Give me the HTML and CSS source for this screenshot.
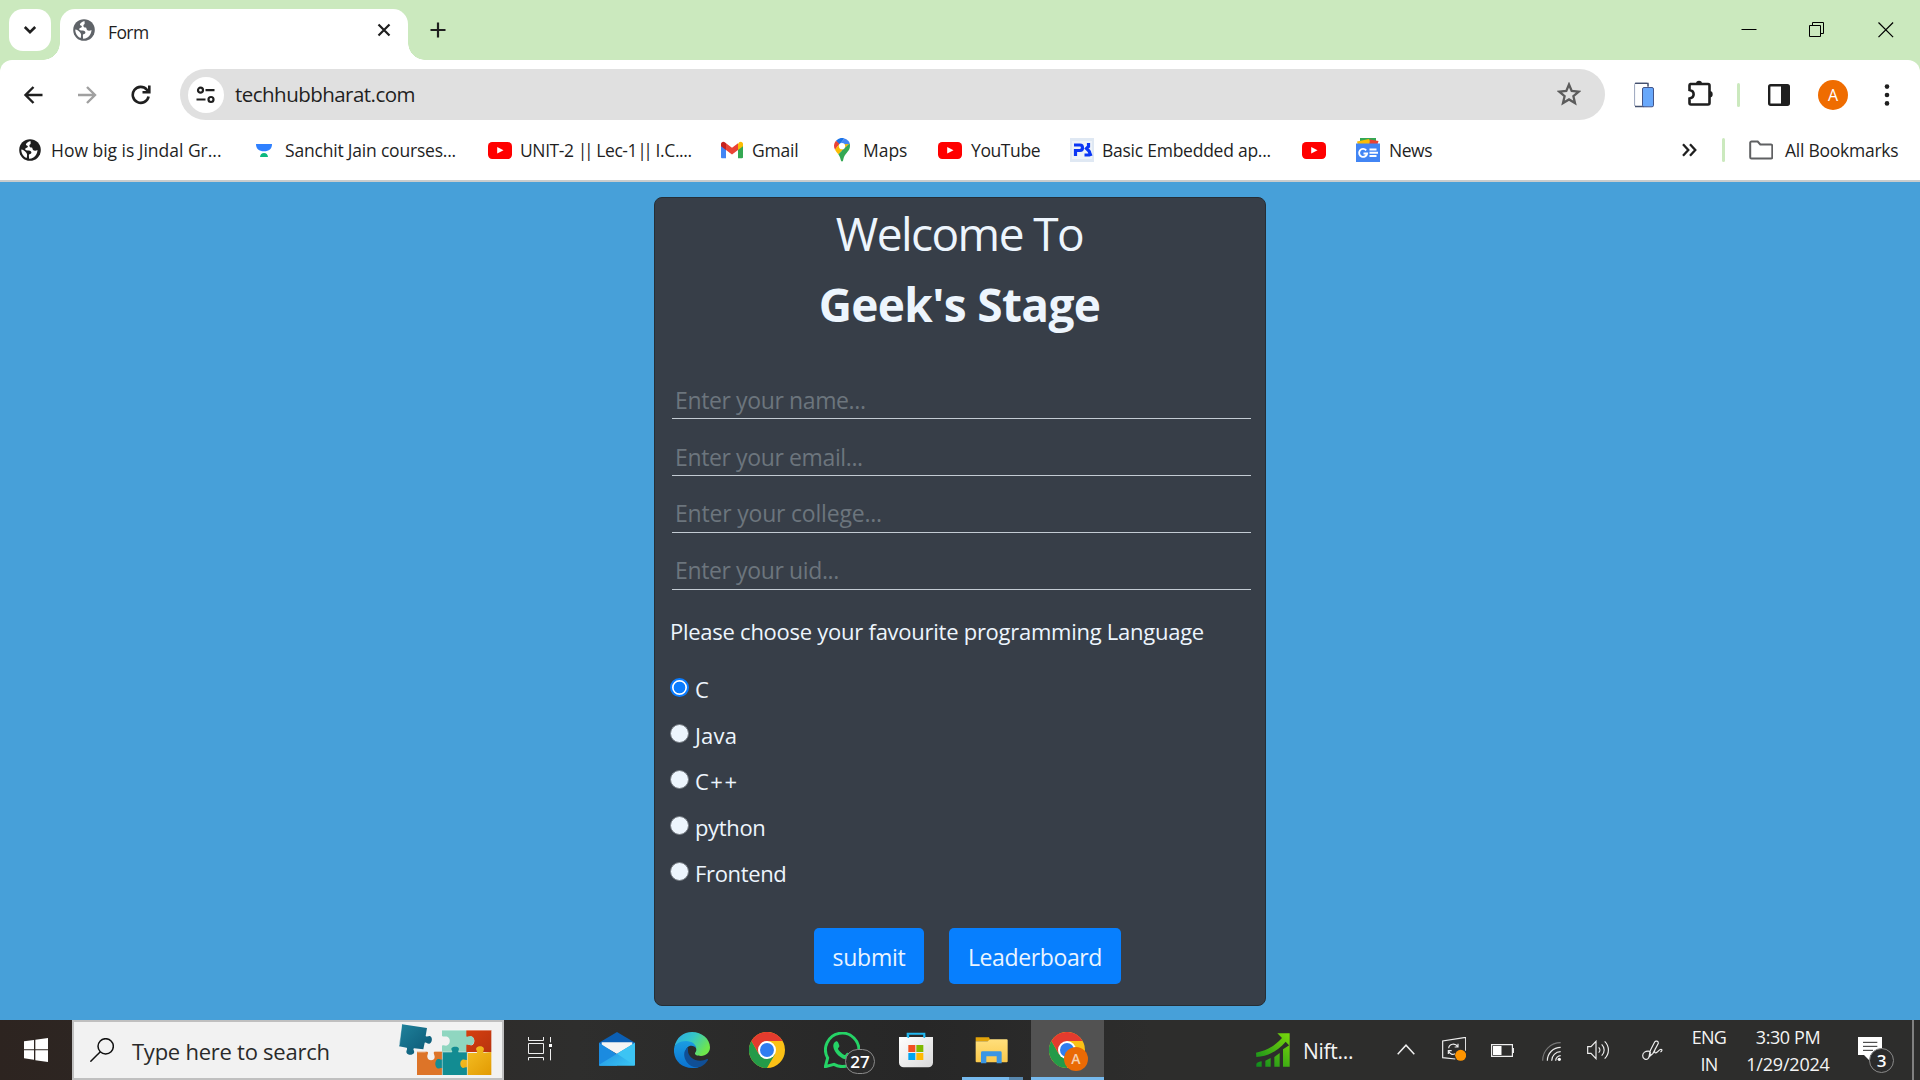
FILE: index.html
```html
<!DOCTYPE html>
<html lang="en">
<head>
<meta charset="utf-8">
<title>Form</title>
<link rel="stylesheet" href="styles.css">
</head>
<body>
<svg class="defs" width="0" height="0">
  <defs>
    <symbol id="globe" viewBox="0 0 24 24"><circle cx="12" cy="12" r="10.8" fill="currentColor"/><path d="M12.500 3.100c-3 .6-4.600 2.500-4.600 3.700 0 1 2.200.6 2 1.900-.2 1-1.900.9-2.500 1.800-.7 1.100.2 1.900 1.900 1.900 2.100 0 3.600.2 4 1.600.3 1-.2 1.700-1.200 2-1 .2-1.300.8-1.200 1.800l.2 2.900c3-.1 6.100-1.900 7.400-4.800.6-1.200 1-2.500 1-3.900-1.500.9-3.500.9-4.500-.1-.8-.9-.2-2-1.400-2.300-1.500-.3-2.300-.9-2.200-2.200.1-1.100 1.300-1 1.300-2z" fill="#fff"/><path d="M3.300 11.500c1.700.2 3.700 1.500 5 3.300.7 1 1 2 .7 3.500l-.3 1.700C5.400 18.700 3.200 15.500 3.300 11.500z" fill="#fff"/></symbol>
    <symbol id="youtube" viewBox="0 0 24 24"><rect y="4" width="24" height="17" rx="4.200" fill="#f00"/><path d="M9.200 9v6.600l6.300-3.300z" fill="#fff"/></symbol>
    <symbol id="chrome" viewBox="0 0 48 48"><circle cx="24" cy="24" r="24" fill="#fbc116"/><path d="M24 24 13.600 30 3.200 12A24 24 0 0 0 24 48L34.400 30z" fill="#249a49"/><path d="M3.200 12A24 24 0 0 1 44.800 12H24v12L13.600 30z" fill="#e33b2e"/><circle cx="24" cy="24" r="12" fill="#fff"/><circle cx="24" cy="24" r="9.300" fill="#2f7df0"/></symbol>
    <linearGradient id="mailg" x1="0" y1="0" x2="1" y2="1"><stop offset="0" stop-color="#1a86dd"/><stop offset="1" stop-color="#3cc8f5"/></linearGradient>
    <linearGradient id="edgeTop" x1="0" y1="0" x2="1" y2=".5"><stop offset="0" stop-color="#2aa7e8"/><stop offset=".5" stop-color="#35c5c8"/><stop offset="1" stop-color="#6ee64c"/></linearGradient>
    <linearGradient id="edgeLow" x1="0" y1="0" x2="0" y2="1"><stop offset="0" stop-color="#1b9de2"/><stop offset="1" stop-color="#0a72d0"/></linearGradient>
    <linearGradient id="storeg" x1="0" y1="0" x2="1" y2="1"><stop offset="0" stop-color="#fff"/><stop offset="1" stop-color="#d9d9d9"/></linearGradient>
    <linearGradient id="foldg" x1="0" y1="0" x2="0" y2="1"><stop offset="0" stop-color="#ffdf7c"/><stop offset="1" stop-color="#fbc94b"/></linearGradient>
    <linearGradient id="growth" x1="0" y1="1" x2="1" y2="0"><stop offset="0" stop-color="#0c8a1e"/><stop offset=".7" stop-color="#5cc00f"/><stop offset="1" stop-color="#77d80c"/></linearGradient>
    <linearGradient id="teal" x1="0" y1="0" x2="1" y2="1"><stop offset="0" stop-color="#1f829c"/><stop offset="1" stop-color="#0b5673"/></linearGradient>
    <linearGradient id="gold" x1="0" y1="0" x2="1" y2="1"><stop offset="0" stop-color="#f8c52a"/><stop offset="1" stop-color="#e29a02"/></linearGradient>
    <linearGradient id="red" x1="0" y1="0" x2="1" y2="1"><stop offset="0" stop-color="#d6400f"/><stop offset="1" stop-color="#b8330f"/></linearGradient>
  </defs>
</svg>

<header class="tabstrip">
  <button class="tab-search"><svg width="14" height="10" viewBox="0 0 14 10"><path d="M1.800 2 7 7.200 12.200 2" fill="none" stroke="#1f1f1f" stroke-width="2.600"/></svg></button>
  <div class="tab">
    <svg class="tab-icon" width="24" height="24"><use href="#globe"/></svg>
    <span class="tab-title">Form</span>
    <svg class="tab-close" width="14" height="14" viewBox="0 0 14 14"><path d="M1.500 1.500 12.500 12.500M12.500 1.500 1.500 12.500" stroke="#1f1f1f" stroke-width="2.200"/></svg>
  </div>
  <svg class="newtab" width="16" height="16" viewBox="0 0 16 16"><path d="M8 .5v15M.5 8h15" stroke="#1f1f1f" stroke-width="2.200"/></svg>
  <div class="window-buttons">
    <svg width="16" height="16" viewBox="0 0 16 16"><path d="M.5 7.500h15" stroke="#000"/></svg>
    <svg width="16" height="16" viewBox="0 0 16 16" fill="none" stroke="#000"><path d="M.5 3.500h11v11H.5zM3.500 3.500v-3h11v11h-3"/></svg>
    <svg width="16" height="16" viewBox="0 0 16 16"><path d="M.5.5l14.600 14.600M15.100.5.5 15.100" stroke="#000" stroke-width="1.200"/></svg>
  </div>
</header>

<div class="chrome">
  <nav class="toolbar">
    <div class="nav-buttons">
      <svg width="20" height="20" viewBox="0 0 20 20" fill="none" stroke="#1f1f1f" stroke-width="2.400"><path d="M19.500 10H2.500M10.500 2l-8 8 8 8"/></svg>
      <svg width="20" height="20" viewBox="0 0 20 20" fill="none" stroke="#a0a0a0" stroke-width="2.400"><path d="M1 10h16.500M10 2l8 8-8 8"/></svg>
      <svg width="20" height="20" viewBox="0 0 20 20" fill="none" stroke="#1f1f1f" stroke-width="2.600"><path d="M17.600 11.500A8 8 0 1 1 15.800 4.600L18 7"/><path d="M18.300.5V7.200H11.500"/></svg>
    </div>
    <div class="omnibox">
      <div class="site-info"><svg width="20" height="18" viewBox="0 0 20 18" fill="none" stroke="#1f1f1f" stroke-width="2.200"><circle cx="4.500" cy="4.200" r="2.500"/><path d="M9.500 4.200h9M.5 13.500h9"/><circle cx="15" cy="13.500" r="2.500"/></svg></div>
      <span class="url">techhubbharat.com</span>
      <svg class="star" width="24" height="24" viewBox="0 0 24 24"><path d="M12 2.500l2.700 6.500 7 .6-5.300 4.600 1.600 6.900-6-3.700-6 3.700 1.600-6.900L2.300 9.600l7-.6z" fill="none" stroke="#5c5c5c" stroke-width="2.300"/></svg>
    </div>
    <div class="tools">
      <svg class="t-phone" width="20" height="26" viewBox="0 0 20 26"><rect x=".6" y="1" width="13.500" height="23.500" rx="1.500" fill="#fff" stroke="#9aa5bd"/><path d="M1 1.400h13v3M1 24.500h9" fill="none" stroke="#44506e" stroke-width="1.400"/><rect x="8.500" y="5.500" width="11" height="19.300" rx="1.500" fill="#68a8fb" stroke="#44568a"/></svg>
      <svg class="t-ext" width="27" height="26" viewBox="0 0 27 26"><path d="M3.500 4H21a1.500 1.500 0 0 1 1.500 1.500V23a1.500 1.500 0 0 1-1.500 1.500H4A1.500 1.500 0 0 1 2.500 23v-4.500c5.500-1 5.500-7.500 0-8.500V5.500A1.500 1.500 0 0 1 3.500 4z" fill="none" stroke="#1f1f1f" stroke-width="2.600"/><path d="M9 4a3 3.200 0 0 1 6 0zM22.500 11a3.200 3.200 0 0 1 0 6.400z" fill="#1f1f1f"/></svg>
      <i class="divider"></i>
      <svg class="t-panel" width="22" height="22" viewBox="0 0 22 22"><rect x="1.200" y="1.200" width="19.600" height="19.600" rx="1.500" fill="none" stroke="#1f1f1f" stroke-width="2.400"/><path d="M13 1h8v20h-8z" fill="#1f1f1f"/></svg>
      <span class="avatar">A</span>
      <svg class="t-menu" width="6" height="22" viewBox="0 0 6 22" fill="#1f1f1f"><circle cx="3" cy="2.600" r="2.300"/><circle cx="3" cy="11" r="2.300"/><circle cx="3" cy="19.400" r="2.300"/></svg>
    </div>
  </nav>

  <nav class="bookmarks">
    <a class="bm"><svg><use href="#globe"/></svg><span>How big is Jindal Gr...</span></a>
    <a class="bm bm-course"><svg viewBox="0 0 24 24"><path d="M4 6h16c0 5-3 7.300-8 7.300S4 11 4 6z" fill="#2f80ff"/><path d="M8 19c.3-2.600 1.700-4 4-4s3.700 1.400 4 4z" fill="#0cb87f"/></svg><span>Sanchit Jain courses...</span></a>
    <a class="bm bm-unit"><svg><use href="#youtube"/></svg><span>UNIT-2 <b>||</b> Lec-1<b>||</b> I.C....</span></a>
    <a class="bm bm-gmail"><svg viewBox="0 0 24 24"><path d="M1 7v12.300c0 .5.400.9.900.9H6V10z" fill="#4285f4"/><path d="M18 10v10.200h4.100c.5 0 .9-.4.900-.9V7z" fill="#34a853"/><path d="M18 6v6l5-3.800V6c0-2-2.200-3-3.800-1.800z" fill="#fbbc04"/><path d="M6 12V5.200l6 4.500 6-4.500V12l-6 4.500z" fill="#ea4335"/><path d="M1 6v2.200L6 12V5.200L4.800 4.200C3.200 3 1 4 1 6z" fill="#c5221f"/></svg><span>Gmail</span></a>
    <a class="bm bm-maps"><svg viewBox="0 0 24 24"><path d="M6 2.800A8 8 0 0 1 14.500.4L9 7z" fill="#1a73e8"/><path d="M14.500.4c2.700.8 4.600 2.600 5.300 5.100L12 14 9 7z" fill="#4285f4"/><path d="M6 2.800c-2.500 3-2.500 6-1 9L9.500 6z" fill="#ea4335"/><path d="M5 11.800c.8 1.500 2 3 3.300 4.500L19 6 9 6.500z" fill="#fbbc04"/><path d="M19.800 5.500c.9 5.500-1.500 7.500-4 10.500-2 2.500-2.300 4.800-2.800 6.800-.3 1-1.700 1-2 0-.6-2-1-4.200-2.700-6.500z" fill="#34a853"/><circle cx="12" cy="8.200" r="3.100" fill="#fff"/></svg><span>Maps</span></a>
    <a class="bm bm-yt"><svg><use href="#youtube"/></svg><span>YouTube</span></a>
    <a class="bm bm-ps"><svg viewBox="0 0 24 24"><path d="M0 0h24v24H0z" fill="#dfe8f3"/><path d="M2 3h20v18H2z" fill="#edf2f8"/><path d="M5.500 18v-5.500H10c3.300 0 3.300-5.500 0-5.500H4M18.500 5v3.500l-2 2 2.500 2.500c1.500 2 1 4-1.500 4H14.500M19 13l2 5" fill="none" stroke="#0a36f5" stroke-width="3.200"/></svg><span>Basic Embedded ap...</span></a>
    <a class="bm"><svg><use href="#youtube"/></svg></a>
    <a class="bm bm-news"><svg viewBox="0 0 24 24"><path d="M4 0h16v8H4z" fill="#34a853"/><path d="M1 3.500 13 1l3 6H2z" fill="#fbbc04"/><path d="M14 1.500 22.500 3 21 8h-8z" fill="#ea4335"/><path d="M0 5.500h24V24H0z" fill="#4285f4"/><path d="M10.200 12.300a4 4 0 1 0 .9 3.200H7.500M13.500 11.500h7M13.500 14.700h8.500M13.500 18h7" fill="none" stroke="#fff" stroke-width="1.900"/></svg><span>News</span></a>
    <svg class="more" width="15" height="14" viewBox="0 0 15 14"><path d="M1 1.300 6.300 7 1 12.700M8 1.300 13.300 7 8 12.700" fill="none" stroke="#1f1f1f" stroke-width="2.300"/></svg>
    <i class="divider"></i>
    <a class="bm bm-all"><svg viewBox="0 0 24 24"><path d="M2.500 3.500h6.200l2.600 3H22a1.300 1.300 0 0 1 1.300 1.300v11.400A1.300 1.300 0 0 1 22 20.500H2.500a1.300 1.300 0 0 1-1.300-1.300V4.800a1.300 1.300 0 0 1 1.300-1.300z" fill="none" stroke="#5f6062" stroke-width="2"/></svg><span>All Bookmarks</span></a>
  </nav>
</div>

<main class="page">
  <form class="card">
    <h1 class="welcome">Welcome To</h1>
    <h1 class="brand">Geek's Stage</h1>
    <div class="fields">
      <input type="text" placeholder="Enter your name...">
      <input type="text" placeholder="Enter your email...">
      <input type="text" class="college" placeholder="Enter your college...">
      <input type="text" class="uid" placeholder="Enter your uid...">
    </div>
    <p class="question">Please choose your favourite programming Language</p>
    <div class="options">
      <label><input type="radio" name="lang" checked><span>C</span></label>
      <label class="java"><input type="radio" name="lang"><span>Java</span></label>
      <label class="cpp"><input type="radio" name="lang"><span>C++</span></label>
      <label><input type="radio" name="lang"><span>python</span></label>
      <label><input type="radio" name="lang"><span>Frontend</span></label>
    </div>
    <div class="actions">
      <button class="btn btn-submit" type="button">submit</button>
      <button class="btn btn-board" type="button">Leaderboard</button>
    </div>
  </form>
</main>

<footer class="taskbar">
  <div class="start"><svg width="24" height="24" viewBox="0 0 72 72"><path d="M0 10l30-4v28H0zM34 5.500 72 0v34H34zM0 37h30v28L0 61zM34 37h38v35l-38-5z" fill="#fff"/></svg></div>
  <div class="search">
    <svg width="24" height="24" viewBox="0 0 72 72" fill="none" stroke="#111" stroke-width="4.500"><circle cx="47" cy="25" r="23"/><path d="M31 41 1 71"/></svg>
    <span class="search-text">Type here to search</span>
    <svg class="puzzle" width="96" height="53" viewBox="1192 36 288 159">
      <path d="M1252 122h76v70h-76z" fill="#dd7428"/>
      <path d="M1280 120c10 4 2 10 3 18 2 14 22 12 22 0 0-8-6-12 0-18z" fill="#f2f2f2"/>
      <path d="M1327 57h75v65h-75v-18c6-4 10 2 16-1 10-6 10-22 0-26-6-2-10 2-16-2z" fill="#8fd6c0"/>
      <path d="M1400 57h75v66h-75v-22c6-4 10 4 18 1 8-5 8-19 0-24-8-3-12 4-18 1z" fill="url(#red)"/>
      <path d="M1398 76c6 4 12-3 18 0 10 5 10 22 0 26-6 3-12-4-18 0z" fill="#8fd6c0"/>
      <path d="M1328 124h28c6-4-4-7 0-13 4-5 18-5 21 0 3 6-4 9 0 13h26v68h-75v-20c-5-4-9 3-15 0-8-5-8-22 0-27 6-3 10 4 15 0z" fill="#128c92"/>
      <path d="M1403 126h28c5-4-4-8-1-15 4-7 19-7 22 0 3 7-4 11 0 14l23-2v69h-72v-22c-5-4-10 3-15 0-8-5-8-20 0-24 6-3 10 3 15 0z" fill="url(#gold)"/>
      <path d="M1207 40l75 11-4 24c5 5 9-2 14 1 8 5 5 20-3 22-6 1-9-6-14-3l-4 20-28-3c-5 4 3 7 0 14-4 7-19 7-22 0-3-8 4-11 0-16l-23-4z" fill="url(#teal)"/>
      <path d="M1327 58h148M1328 124v68M1403 126v66M1253 123h25M1206 42l-7 62" stroke="#fff" stroke-opacity=".45" stroke-width="3"/>
    </svg>
  </div>

  <div class="slot taskview"><svg width="25" height="24" viewBox="0 0 75 72" fill="none" stroke="#eee" stroke-width="3"><path d="M1.500 19.500h45v30h-45zM1.500 0v10.500h45V0M1.500 70V61.500h45V70M67.500 0v16M67.500 36v34"/><path d="M63 21h9v9h-9z" fill="#fff" stroke="none"/></svg></div>
  <div class="slot"><svg class="lift" width="36" height="34" viewBox="0 0 108 102"><path d="M0 32 54 0l54 32v20H0z" fill="#0b5fb4"/><path d="M8 31h92v8L54 66 8 40z" fill="#f4f4f4"/><path d="M0 32l54 35v34H3a3 3 0 0 1-3-3z" fill="#1b8be0"/><path d="M108 32 0 98a3 3 0 0 0 3 3h102a3 3 0 0 0 3-3z" fill="url(#mailg)"/><path d="M108 32 54 65l52 35 2-2z" fill="#3cc4f4"/></svg></div>
  <div class="slot"><svg width="36" height="36" viewBox="0 0 108 108"><path d="M1 46C7 16 28 0 54 0c30 0 54 21 54 46 0 16-12 26-27 26-12 0-19-3-18-8 1-4 4-5 4-11 0-12-12-23-29-23C20 30 5 38 1 46z" fill="url(#edgeTop)"/><path d="M0 50c2-14 18-23 36-23 18 0 31 11 31 22-3-5-9-8-15-8-11 0-18 10-16 22 3 20 15 38 38 44-8 2-14 1-20 1C22 108-3 84 0 50z" fill="url(#edgeLow)"/><path d="M42 46c-14 9-15 28-4 44 10 14 27 20 42 14 9-4 17-11 22-20 1-3-1-4-3-3-7 4-13 5-20 5-21 0-37-14-37-30z" fill="#104f96"/></svg></div>
  <div class="slot"><svg width="36" height="36"><use href="#chrome"/></svg></div>
  <div class="slot badge-slot"><svg width="36" height="36" viewBox="0 0 108 108"><path d="M4 104 11 78A50 50 0 1 1 30 97z" fill="none" stroke="#25d366" stroke-width="9"/><path d="M38 28c-5 0-11 7-10 16 2 18 24 38 42 39 8 0 14-5 14-13 0-3-11-8-14-8s-5 8-9 7C53 65 44 56 42 51c-1-3 5-6 4-10-1-3-4-13-8-13z" fill="#25d366"/></svg><span class="badge">27</span></div>
  <div class="slot store"><svg width="36" height="36" viewBox="0 0 108 108"><path d="M29 18V5h50v13" fill="none" stroke="#22b8f0" stroke-width="6"/><path d="M3 15h102v77a14 14 0 0 1-14 14H17A14 14 0 0 1 3 92z" fill="url(#storeg)"/><path d="M31 18V8M79 18V8" stroke="#22b8f0" stroke-width="5"/><path d="M31 39h21v21H31z" fill="#f25022"/><path d="M55 39h21v21H55z" fill="#7fba00"/><path d="M31 63h21v21H31z" fill="#00a4ef"/><path d="M55 63h21v21H55z" fill="#ffb900"/></svg></div>
  <div class="slot running"><svg width="33" height="27" viewBox="0 0 99 81"><path d="M2 1h40l5 12H2z" fill="#e2a30a"/><path d="M2 13h36l8-6h49a3 3 0 0 1 3 3v63a3 3 0 0 1-3 3H5a3 3 0 0 1-3-3z" fill="url(#foldg)"/><path d="M18 79V47a4 4 0 0 1 4-4h54a4 4 0 0 1 4 4v32H65V58H34v21z" fill="#3a96e4"/></svg></div>
  <div class="slot active badge-slot"><svg width="36" height="36"><use href="#chrome"/></svg><span class="badge badge-user">A</span></div>

  <div class="tray">
    <svg class="growth" width="35" height="36" viewBox="0 0 105 108" fill="url(#growth)"><path d="M0 62C35 55 58 40 78 18L64 4h37v38L89 29C66 56 36 74 1 75zM1 95c5-5 10-6 16-7v16H1zM28 86l16-8v26H28zM55 75l16-12v41H55zM81 52l20-13v65H81z"/></svg>
    <span class="news-text">Nift...</span>
    <svg class="caret" width="18" height="11" viewBox="0 0 18 11"><path d="M.7 10.200 9 1.200l8.300 9" fill="none" stroke="#eee" stroke-width="1.500"/></svg>
    <svg class="update" width="24" height="24" viewBox="0 0 72 72"><path d="M40 66 2 62V12L71 1v40" fill="none" stroke="#eee" stroke-width="3.500"/><path d="M20 34c1-14 20-17 27-5M48 20v10H38M46 38M19 51V41h10M20 43c4 9 12 11 19 7" fill="none" stroke="#eee" stroke-width="3.500"/><circle cx="56" cy="55" r="16.500" fill="#ff9500"/></svg>
    <svg class="battery" width="23" height="13" viewBox="0 0 23 13"><path d="M.6.600h20.800v11.800H.6zM21.400 4.500h1v4h-1" fill="none" stroke="#eee" stroke-width="1.200"/><path d="M2 2h8.500v9H2z" fill="#fff"/></svg>
    <svg class="wifi" width="19" height="19" viewBox="0 0 57 57" fill="none" stroke-width="3.500"><path d="M2 56C2 26 26 2 56 2" stroke="#777"/><path d="M16 56c0-22 18-40 40-40M29 56c0-15 12-27 27-27M41 56c0-8 7-15 15-15" stroke="#eee"/><circle cx="52" cy="52" r="5" fill="#fff"/></svg>
    <svg class="volume" width="23" height="20" viewBox="0 0 69 60" fill="none" stroke="#eee" stroke-width="3.500"><path d="M2 20h10L27 4v52L12 40H2zM35 22c5 5 5 11 0 16M44 13c10 10 10 24 0 34M53 4c15 15 15 37 0 52"/></svg>
    <svg class="pen" width="21" height="21" viewBox="0 0 63 63" fill="none" stroke="#eee" stroke-width="3.500"><path d="M23 34C10 32 2 38 2 47s10 14 16 9 2-14 8-27L38 6c3-5 12-3 11 4L33 40l-9 8 1-12M40 26c-4 9-3 14 3 12s8-10 14-10c4 0 4 6-2 8"/></svg>
    <div class="lang"><span>ENG</span><span>IN</span></div>
    <div class="clock"><span>3:30 PM</span><span class="date">1/29/2024</span></div>
    <div class="notify"><svg width="24" height="24" viewBox="0 0 72 72"><path d="M0 0h72v54H36v18L18 54H0z" fill="#fff"/><path d="M15 16h43M15 28h43M15 40h30" stroke="#2c2c2b" stroke-width="3"/></svg><span class="badge badge-count">3</span></div>
    <i class="peek"></i>
  </div>
</footer>
</body>
</html>
```
FILE: styles.css
```css
* { box-sizing: border-box; }
body {
  margin: 0;
  width: 1920px;
  height: 1080px;
  overflow: hidden;
  display: flex;
  flex-direction: column;
  font-family: "Open Sans", "Noto Sans", sans-serif;
  background: #cbe9be;
  color: #1f1f1f;
}
svg { display: block; flex: none; }
.defs { position: absolute; }
span { white-space: nowrap; }
button { font-family: inherit; border: 0; padding: 0; }

/* Tab strip */
.tabstrip { height: 60px; flex: none; display: flex; align-items: flex-start; padding-left: 9px; }
.tab-search {
  width: 42px; height: 42px; margin-top: 9px; border-radius: 14px; background: #fff;
  display: flex; align-items: center; justify-content: center;
}
.tab {
  position: relative; width: 348px; height: 51px; margin: 9px 0 0 9px; padding: 0 17px 9px 12px;
  border-radius: 15px 15px 0 0; background: #fff;
  display: flex; align-items: center;
}
.tab::before, .tab::after { content: ""; position: absolute; bottom: 0; width: 17px; height: 17px; }
.tab::before { left: -17px; background: radial-gradient(circle at 0 0, transparent 16.500px, #fff 17px); }
.tab::after { right: -17px; background: radial-gradient(circle at 100% 0, transparent 16.500px, #fff 17px); }
.tab-icon { color: #5f6368; }
.tab-title { margin: 3px auto 0 12px; font-size: 17.500px; letter-spacing: -.6px; }
.newtab { margin: 22px 0 0 22px; }
.window-buttons { margin: 22px 26px 0 auto; display: flex; gap: 52px; }
.window-buttons svg:last-child { margin-left: 1px; }

/* Toolbar */
.chrome {
  height: 122px; flex: none; background: #fff; border-radius: 12px 12px 0 0;
  border-bottom: 2px solid #c9cccd;
}
.toolbar { height: 60px; padding-top: 9px; display: flex; align-items: flex-start; }
.nav-buttons { width: 180px; height: 51px; padding-left: 23px; display: flex; align-items: center; gap: 34px; }
.omnibox {
  width: 1425px; height: 51px; border-radius: 26px; background: #e0e0e0;
  display: flex; align-items: center; padding: 0 24px 0 8px;
}
.site-info {
  width: 36px; height: 36px; border-radius: 50%; background: #fff;
  display: flex; align-items: center; justify-content: center;
}
.star { margin-top: -1px; }
.url { margin: -2px auto 0 11px; font-size: 20.500px; letter-spacing: -.53px; }
.tools { height: 51px; flex: 1; display: flex; align-items: center; padding-left: 29px; }
.t-ext { margin: -3px 0 0 33px; }
.divider { width: 3px; height: 24px; border-radius: 2px; background: #cbe9be; }
.tools .divider { margin-left: 23px; }
.t-panel { margin-left: 28px; }
.avatar {
  width: 30px; height: 30px; margin-left: 28px; border-radius: 50%;
  background: #ef6c00; color: #fff; font-size: 16px; line-height: 30px; text-align: center;
}
.t-menu { margin-left: 36px; }

/* Bookmarks bar */
.bookmarks {
  height: 60px; padding-left: 18px; display: grid; align-items: center;
  grid-template-columns: 234px 236px 232px 110px 108px 132px 232px 54px 326px 40px 27px auto;
}
.bm { display: flex; align-items: center; font-size: 17.500px; }
.bm svg { width: 24px; height: 24px; }
.bm span { margin: -1px 0 0 9px; letter-spacing: -.02px; }
.bm b { font-weight: 400; letter-spacing: -3.500px; margin-right: 2px; }
.bm-course span { letter-spacing: -.2px; }
.bm-unit span { margin-left: 8px; letter-spacing: -.4px; }
.bm-gmail span { margin-left: 8px; letter-spacing: -.2px; }
.bm-yt span { letter-spacing: -.4px; }
.bm-ps span { margin-left: 8px; letter-spacing: -.25px; }
.bm-news span { letter-spacing: -.45px; }
.bm-all span { margin-left: 12px; letter-spacing: -.25px; }

/* Page */
.page { height: 838px; flex: none; background: #47a0d9; display: flex; justify-content: center; padding-top: 15px; }
.card {
  width: 612px; height: 809px; padding: 6px 14px 0 15px;
  background: #373e48; border: 1px solid #252e36; border-radius: 8px; color: #edf5fd;
}
h1 { margin: 0; height: 58px; font-size: 46px; line-height: 59px; text-align: center; }
.welcome { padding-right: 2px; font-weight: 400; letter-spacing: -1.550px; }
.brand { margin-top: 13px; padding-right: 2px; font-weight: 700; letter-spacing: -.65px; }
.fields { margin: 29px 0 0 2px; }
.fields input {
  display: block; width: 579px; height: 57px; padding: 22px 0 2px 3px;
  border: 0; border-bottom: 1px solid #c3cbd3; background: none; color: inherit;
  font: 23px/32px "Open Sans", "Noto Sans", sans-serif; letter-spacing: -.38px;
}
.fields .college { padding: 21px 0 3px 3px; letter-spacing: -.2px; }
.fields .uid { padding: 21px 0 3px 3px; }
.fields input::placeholder { color: #6c757d; opacity: 1; }
.question { margin: 26px 0 20px; font-size: 22px; line-height: 30px; letter-spacing: -.26px; white-space: nowrap; }
.options label { display: flex; align-items: center; height: 46px; font-size: 22px; letter-spacing: -.35px; }
.options .java { letter-spacing: .2px; }
.options .cpp { letter-spacing: 1.500px; }
.options input {
  appearance: none; width: 19px; height: 19px; margin: -3px 7px 0 0;
  border: 1px solid #767c83; border-radius: 50%; background: #edf5fd;
}
.options input:checked { border: 2px solid #0a7cff; background: radial-gradient(circle, #0a7cff 5.500px, #fff 6.200px); }
.options span { margin-left: -1px; }
.actions { display: flex; gap: 25px; margin: 32px 0 0 144px; }
.btn { height: 56px; padding-top: 2px; border-radius: 5px; background: #077ffe; color: #eaf4ff; font-size: 23px; }
.btn-submit { width: 110px; letter-spacing: -.2px; }
.btn-board { width: 172px; letter-spacing: -.38px; }

/* Taskbar */
.taskbar { height: 60px; flex: none; display: flex; background: linear-gradient(90deg, #2d2420, #2e2e2d 30%, #272727 48%, #2d2d2c 60%); color: #f4f4f4; }
.start { width: 72px; display: flex; align-items: center; justify-content: center; }
.search {
  width: 432px; border: 2px solid #c0c0c0; background: #f2f2f2; color: #2a2a2a;
  display: flex; align-items: center; padding-left: 16px;
}
.search-text { margin: 2px auto 0 18px; font-size: 22px; letter-spacing: -.25px; }
.puzzle { margin: -2px 9px 0 0; }
.slot { position: relative; width: 75px; display: flex; align-items: center; justify-content: center; }
.slot .lift { margin-top: -3px; }
.taskview { padding: 0 2px 2px 0; }
.store { padding-right: 1px; }
.badge {
  position: absolute; height: 25px; border: 1px solid #8a8a8a; border-radius: 13px;
  background: #2b2b2b; color: #fff; font-size: 17px; font-weight: 600; line-height: 23px; text-align: center;
}
.slot .badge { left: 41px; top: 29px; width: 30px; }
.running::after {
  content: ""; position: absolute; left: 8px; bottom: 0; width: 61px; height: 3px;
  background: linear-gradient(90deg, #76b9ed 47px, #5887ad 47px);
}
.slot.active { width: 73px; margin-left: 2px; background: #525252; border-bottom: 3px solid #76b9ed; padding: 3px 1px 0 0; }
.slot .badge-user { left: 33px; top: 27px; width: 24px; height: 24px; border: 0; background: #ea6a05; color: #f6cfae; font-size: 14px; line-height: 24px; }
.tray { flex: 1; display: flex; align-items: center; padding-left: 152px; }
.growth { margin-top: -1px; }
.news-text { margin: 1px 0 0 12px; width: 51px; font-size: 21px; letter-spacing: -.3px; }
.caret { margin: -2px 0 0 43px; }
.update { margin: -2px 0 0 27px; }
.battery { margin: 1px 0 0 25px; }
.wifi { margin: 2px 0 0 28px; }
.volume { margin-left: 26px; }
.pen { margin-left: 32px; }
.lang, .clock { display: flex; flex-direction: column; align-items: center; padding-top: 1px; font-size: 18px; line-height: 27px; letter-spacing: -.4px; }
.lang { width: 40px; margin-left: 26px; letter-spacing: -.7px; }
.clock { width: 90px; margin-left: 14px; }
.date { letter-spacing: -.2px; }
.notify { position: relative; margin: -2px 0 0 25px; }
.badge-count { left: 11px; top: 11px; width: 25px; }
.peek { width: 2px; height: 60px; margin-left: 30px; background: #808080; }
```
